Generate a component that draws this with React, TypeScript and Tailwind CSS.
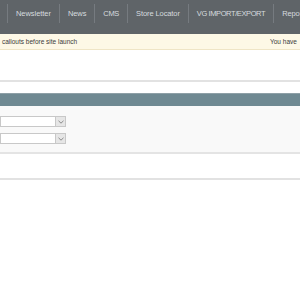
import React from "react";

const navItems = [
  { label: "Newsletter", cls: "tracking-[-0.05px]" },
  { label: "News", cls: "tracking-[-0.1px]" },
  { label: "CMS", cls: "tracking-[-0.3px]" },
  { label: "Store Locator", cls: "tracking-[-0.1px]" },
  { label: "VG IMPORT/EXPORT", cls: "tracking-[-0.4px]" },
  { label: "Reports", cls: "tracking-[-0.1px]" },
];

function Chevron() {
  return (
    <svg width="6" height="4" viewBox="0 0 6 4" fill="none">
      <path d="M0.5 0.8 L3 3.2 L5.5 0.8" stroke="#8a8a8a" strokeWidth="1" />
    </svg>
  );
}

function SelectBox() {
  return (
    <div className="flex h-[11px] w-[66px] border border-[#c8c8c8] bg-white">
      <div className="flex-1" />
      <div className="flex w-[10px] items-center justify-center border-l border-[#c8c8c8] bg-[#e6e6e6]">
        <Chevron />
      </div>
    </div>
  );
}

export default function App() {
  return (
    <div
      className="h-[300px] w-[300px] overflow-hidden bg-white"
      style={{ fontFamily: '"Liberation Sans", Arial, sans-serif' }}
    >
      <div className="flex h-[34px] items-start overflow-hidden whitespace-nowrap bg-[#5f6468] pl-[7px] pt-[4px]">
        {navItems.map((item) => (
          <div
            key={item.label}
            className={`flex h-[19px] shrink-0 items-center border-l border-[#767b80] px-[8px] text-[7.5px] font-normal text-[#d6dbdf] ${item.cls}`}
          >
            {item.label}
          </div>
        ))}
      </div>
      <div className="flex h-[16px] items-center justify-between whitespace-nowrap border-b border-[#efe5c6] bg-[#fdf8e6] pl-[2px] text-[6.5px] text-[#3a3a3a]">
        <span>callouts before site launch</span>
        <span className="mr-[-20px] w-[50px]">You have</span>
      </div>
      <div className="h-[30px]" />
      <div className="h-[2px] bg-[#e2e2e2]" />
      <div className="h-[11px]" />
      <div className="h-[13px] border-t border-[#8ea0a7] bg-[#6f8992]" />
      <div className="flex h-[48px] flex-col gap-[6px] border-b-2 border-[#e4e4e4] bg-[#f9f9f9] pt-[10px]">
        <SelectBox />
        <SelectBox />
      </div>
      <div className="h-[24px]" />
      <div className="h-[2px] bg-[#e2e2e2]" />
    </div>
  );
}
